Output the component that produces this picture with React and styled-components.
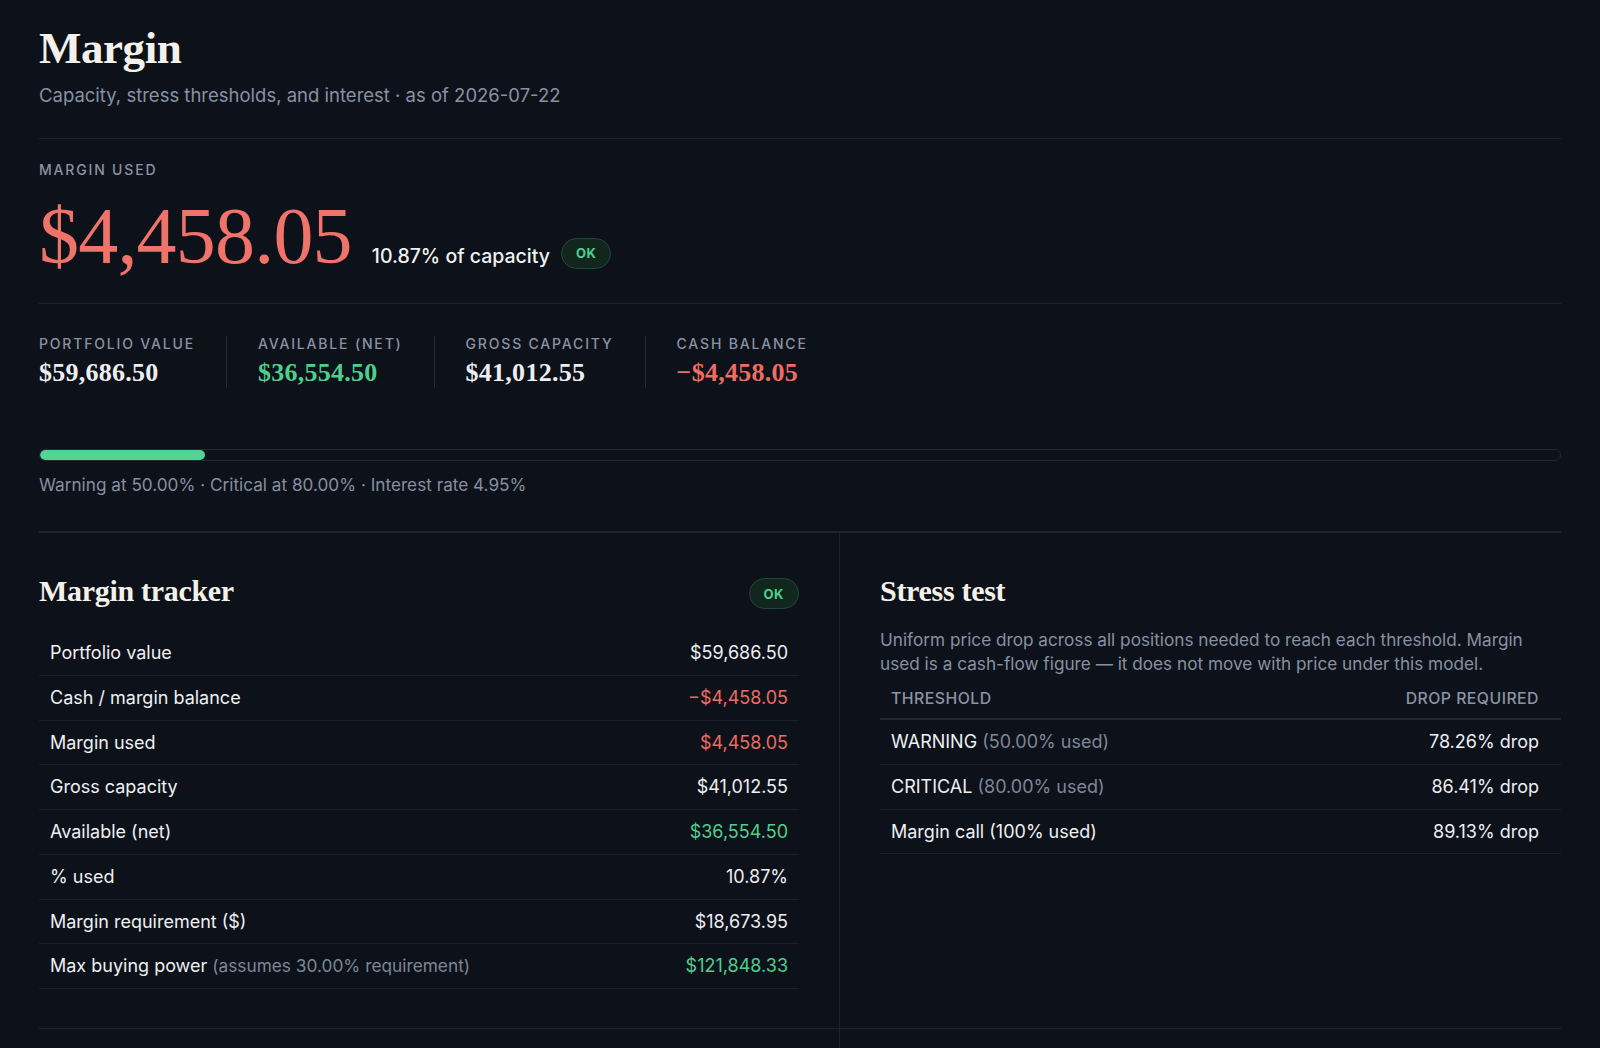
import React from 'react'
import styled, { createGlobalStyle } from 'styled-components'

const GlobalStyle = createGlobalStyle`
  * { box-sizing: border-box; }
  html, body {
    margin: 0;
    background: #0d1119;
  }
  body {
    font-family: Inter, "Noto Sans", sans-serif;
    color: #eceef2;
    -webkit-font-smoothing: antialiased;
  }
`

const tones = {
  red: '#ef6c62',
  green: '#4fcf8d',
  plain: '#eceef2',
}

const Page = styled.main`
  padding: 24px 39px 0;
`

const Header = styled.header`
  padding-bottom: 31px;
  border-bottom: 1px solid #1d222c;
`

const Title = styled.h1`
  margin: 0;
  font-family: "Liberation Serif", serif;
  font-size: 45px;
  line-height: 48px;
  font-weight: 700;
  color: #f4f1ea;
  letter-spacing: -0.01em;
`

const Subtitle = styled.p`
  margin: 11px 0 0;
  font-size: 18.5px;
  line-height: 24px;
  color: #8792a3;
`

const Hero = styled.section`
  padding: 23px 0 27px;
  border-bottom: 1px solid #1d222c;
`

const Eyebrow = styled.div`
  font-size: 14px;
  line-height: 16px;
  letter-spacing: 0.13em;
  text-transform: uppercase;
  color: #8a93a3;
  font-weight: 500;
`

const HeroLine = styled.div`
  margin-top: 18px;
  display: flex;
  align-items: baseline;
  gap: 20px;
`

const BigAmount = styled.div`
  font-family: "Liberation Serif", serif;
  font-size: 80px;
  line-height: 1;
  font-weight: 400;
  color: #f0736a;
  letter-spacing: -0.01em;
`

const Meta = styled.div`
  display: flex;
  align-items: center;
  gap: 11px;
`

const CapacityText = styled.span`
  font-size: 19.5px;
  font-weight: 500;
  color: #f0f1f3;
`

const Badge = styled.span`
  display: inline-flex;
  align-items: center;
  justify-content: center;
  height: 31px;
  padding: 0 14px;
  border-radius: 16px;
  background: #11261d;
  border: 1px solid #1f4a36;
  color: #4fcf8d;
  font-size: 13px;
  font-weight: 700;
  letter-spacing: 0.04em;
  margin-bottom: ${p => p.$lift || 0}px;
  margin-top: ${p => p.$drop || 0}px;
`

const StatsRow = styled.section`
  padding-top: 32px;
  display: flex;
`

const Stat = styled.div`
  display: flex;
  flex-direction: column;
  gap: 6px;
  padding: 0 31px;
  border-left: 1px solid #232834;

  &:first-child {
    padding-left: 0;
    border-left: none;
  }
`

const StatLabel = styled.div`
  font-size: 14px;
  line-height: 16px;
  letter-spacing: 0.13em;
  text-transform: uppercase;
  color: #8a93a3;
  font-weight: 500;
`

const StatValue = styled.div`
  font-family: "Liberation Serif", serif;
  font-size: 26px;
  line-height: 30px;
  font-weight: 700;
  letter-spacing: 0.01em;
  color: ${p => tones[p.$tone || 'plain']};
`

const Meter = styled.section`
  padding: 61px 0 36px;
`

const Track = styled.div`
  height: 12px;
  border-radius: 6px;
  border: 1px solid #222834;
  background: #0e131b;
  overflow: hidden;
`

const Fill = styled.div`
  height: 100%;
  border-radius: 6px;
  background: #52d495;
`

const Caption = styled.p`
  margin: 14px 0 0;
  font-size: 17.2px;
  line-height: 20px;
  color: #858fa0;
`

const PanelGrid = styled.div`
  display: grid;
  grid-template-columns: 800px 1fr;
  border-top: ${p => (p.$thin ? '1px' : '2px')} solid #1f2430;
  min-height: ${p => p.$minHeight || 0}px;
`

const Panel = styled.section`
  padding: ${p => (p.$side === 'right' ? '39px 0 39px 40px' : '39px 40px 39px 0')};
  border-left: ${p => (p.$side === 'right' ? '1px solid #1c212b' : 'none')};
`

const PanelHead = styled.div`
  display: flex;
  align-items: center;
  justify-content: space-between;
  min-height: 36px;
`

const PanelTitle = styled.h2`
  margin: 0;
  font-family: "Liberation Serif", serif;
  font-size: 30px;
  line-height: 35px;
  font-weight: 700;
  color: #f4f1ea;
  letter-spacing: -0.01em;
`

const Table = styled.div`
  margin-top: ${p => p.$gap || 0}px;
`

const Row = styled.div`
  display: flex;
  justify-content: space-between;
  align-items: center;
  padding: 11px ${p => p.$padRight || 11}px 11px 11px;
  border-bottom: 1px solid #1a1f28;
  font-size: 18px;
  line-height: 21.75px;
`

const HeadRow = styled(Row)`
  padding-top: 14px;
  padding-bottom: 10px;
  border-bottom: 2px solid #1f2430;
  font-size: 15.8px;
  line-height: 18px;
  font-weight: 500;
  text-transform: uppercase;
  letter-spacing: 0.03em;
  color: #8a94a5;
`

const Label = styled.span`
  color: #eef0f3;
`

const Note = styled.span`
  color: #7d8798;
  font-size: ${p => (p.$small ? '17.3px' : 'inherit')};
`

const Value = styled.span`
  color: ${p => tones[p.$tone || 'plain']};
`

const Desc = styled.p`
  margin: 20px 0 0;
  padding-right: 24px;
  font-size: 17.2px;
  line-height: 24px;
  color: #8691a2;
`

const stats = [
  { label: 'Portfolio value', value: '$59,686.50' },
  { label: 'Available (net)', value: '$36,554.50', tone: 'green' },
  { label: 'Gross capacity', value: '$41,012.55' },
  { label: 'Cash balance', value: '−$4,458.05', tone: 'red' },
]

const tracker = [
  { label: 'Portfolio value', value: '$59,686.50' },
  { label: 'Cash / margin balance', value: '−$4,458.05', tone: 'red' },
  { label: 'Margin used', value: '$4,458.05', tone: 'red' },
  { label: 'Gross capacity', value: '$41,012.55' },
  { label: 'Available (net)', value: '$36,554.50', tone: 'green' },
  { label: '% used', value: '10.87%' },
  { label: 'Margin requirement ($)', value: '$18,673.95' },
  { label: 'Max buying power', note: '(assumes 30.00% requirement)', value: '$121,848.33', tone: 'green' },
]

const stress = [
  { label: 'WARNING', note: '(50.00% used)', value: '78.26% drop' },
  { label: 'CRITICAL', note: '(80.00% used)', value: '86.41% drop' },
  { label: 'Margin call (100% used)', value: '89.13% drop' },
]

const usedPct = 10.87

export default function App() {
  return (
    <>
      <GlobalStyle />
      <Page>
        <Header>
          <Title>Margin</Title>
          <Subtitle>Capacity, stress thresholds, and interest · as of 2026-07-22</Subtitle>
        </Header>

        <Hero>
          <Eyebrow>Margin used</Eyebrow>
          <HeroLine>
            <BigAmount>$4,458.05</BigAmount>
            <Meta>
              <CapacityText>10.87% of capacity</CapacityText>
              <Badge $lift={6}>OK</Badge>
            </Meta>
          </HeroLine>
        </Hero>

        <StatsRow>
          {stats.map(s => (
            <Stat key={s.label}>
              <StatLabel>{s.label}</StatLabel>
              <StatValue $tone={s.tone}>{s.value}</StatValue>
            </Stat>
          ))}
        </StatsRow>

        <Meter>
          <Track>
            <Fill style={{ width: `${usedPct}%` }} />
          </Track>
          <Caption>Warning at 50.00% · Critical at 80.00% · Interest rate 4.95%</Caption>
        </Meter>

        <PanelGrid>
          <Panel $side='left'>
            <PanelHead>
              <PanelTitle>Margin tracker</PanelTitle>
              <Badge $drop={6}>OK</Badge>
            </PanelHead>
            <Table $gap={22}>
              {tracker.map(r => (
                <Row key={r.label}>
                  <Label>
                    {r.label}
                    {r.note && <Note $small> {r.note}</Note>}
                  </Label>
                  <Value $tone={r.tone}>{r.value}</Value>
                </Row>
              ))}
            </Table>
          </Panel>

          <Panel $side='right'>
            <PanelHead>
              <PanelTitle>Stress test</PanelTitle>
            </PanelHead>
            <Desc>
              Uniform price drop across all positions needed to reach each threshold. Margin
              used is a cash-flow figure — it does not move with price under this model.
            </Desc>
            <Table>
              <HeadRow $padRight={22}>
                <span>Threshold</span>
                <span>Drop required</span>
              </HeadRow>
              {stress.map(r => (
                <Row key={r.label} $padRight={22}>
                  <Label>
                    {r.label}
                    {r.note && <Note> {r.note}</Note>}
                  </Label>
                  <Value>{r.value}</Value>
                </Row>
              ))}
            </Table>
          </Panel>
        </PanelGrid>

        <PanelGrid $thin $minHeight={160}>
          <Panel $side='left' />
          <Panel $side='right' />
        </PanelGrid>
      </Page>
    </>
  )
}
